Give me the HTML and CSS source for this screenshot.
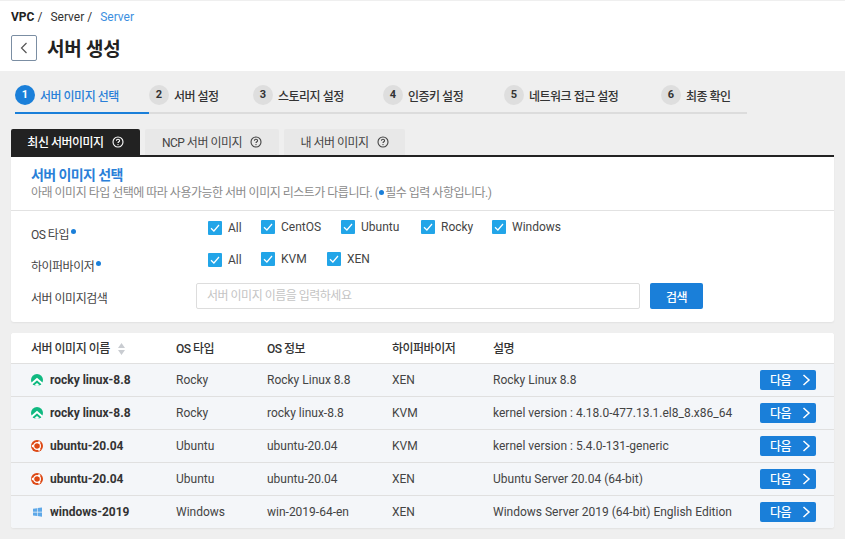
FILE: index.html
```html
<!DOCTYPE html>
<html lang="ko">
<head>
    <meta charset="UTF-8">
    <meta name="viewport" content="width=device-width, initial-scale=1.0">
    <title>서버 생성</title>
    <link rel="stylesheet" href="styles.css">
</head>
<body>
    <svg class="defs" width="0" height="0">
        <symbol id="check" viewBox="0 0 14 14"><path d="M3 7.2 5.9 10 11 4" fill="none" stroke="#fff" stroke-width="1.2"/></symbol>
        <symbol id="help" viewBox="0 0 12 12"><circle cx="6" cy="6" r="5" fill="none" stroke="currentColor" stroke-width="1.1"/><path d="M4.4 4.8C4.4 3.8 5.1 3.3 6 3.3S7.6 3.9 7.6 4.7C7.6 5.8 6 5.8 6 7.1" fill="none" stroke="currentColor" stroke-width="1.1"/><circle cx="6" cy="8.6" r=".7" fill="currentColor"/></symbol>
        <symbol id="rocky" viewBox="0 0 12 12"><circle cx="6" cy="6" r="6" fill="#10b981"/><path d="M.9 9.6 6 5 11.100 9.600" fill="none" stroke="#fff" stroke-width="2"/><path d="M3.400 11.300 6 8.900 8.600 11.300 6 12Z" fill="#fff"/></symbol>
        <symbol id="ubuntu" viewBox="0 0 12 12"><circle cx="6" cy="6" r="6" fill="#dd4814"/><circle cx="6" cy="6" r="3.400" fill="none" stroke="#fff" stroke-width="1.200"/><circle cx="1.900" cy="6" r="1.200" fill="#fff"/><circle cx="8.100" cy="2.400" r="1.200" fill="#fff"/><circle cx="8.100" cy="9.600" r="1.200" fill="#fff"/></symbol>
        <symbol id="windows" viewBox="0 0 12 12"><path d="M2 2.800 6 2.200V5.800H2ZM6.600 2.100 11 1.500V5.800H6.600ZM2 6.400H6V10L2 9.400ZM6.600 6.400H11V10.700L6.600 10.100Z" fill="#5ea8e8"/></symbol>
    </svg>

    <header class="page-head">
        <div class="crumbs">
            <b>VPC</b><span class="sep">/</span><span>Server</span><span class="sep">/</span><span class="current">Server</span>
        </div>
        <div class="title-row">
            <button class="back" aria-label="뒤로">
                <svg width="10" height="12" viewBox="0 0 10 12"><path d="M7.500 1 2.500 6 7.500 11" fill="none" stroke="#555" stroke-width="1.200"/></svg>
            </button>
            <h1>서버 생성</h1>
        </div>
    </header>

    <ol class="steps">
        <li class="step step-1 active"><i>1</i>서버 이미지 선택</li>
        <li class="step step-2"><i>2</i>서버 설정</li>
        <li class="step step-3"><i>3</i>스토리지 설정</li>
        <li class="step step-4"><i>4</i>인증키 설정</li>
        <li class="step step-5"><i>5</i>네트워크 접근 설정</li>
        <li class="step step-6"><i>6</i>최종 확인</li>
    </ol>

    <div class="tabs">
        <a class="tab tab-1 active">최신 서버이미지 <svg><use href="#help"/></svg></a>
        <a class="tab tab-2">NCP 서버 이미지 <svg><use href="#help"/></svg></a>
        <a class="tab tab-3">내 서버 이미지 <svg><use href="#help"/></svg></a>
    </div>

    <section class="card filter">
        <div class="filter-head">
            <h2>서버 이미지 선택</h2>
            <p>아래 이미지 타입 선택에 따라 사용가능한 서버 이미지 리스트가 다릅니다. (<span class="dot"></span>필수 입력 사항입니다.)</p>
        </div>
        <div class="form-row os-row">
            <span class="label">OS 타입<span class="dot"></span></span>
            <div class="opts">
                <label class="opt first w-all"><span class="box"><svg><use href="#check"/></svg></span>All</label>
                <label class="opt w-centos"><span class="box"><svg><use href="#check"/></svg></span>CentOS</label>
                <label class="opt w-ubuntu"><span class="box"><svg><use href="#check"/></svg></span>Ubuntu</label>
                <label class="opt w-rocky"><span class="box"><svg><use href="#check"/></svg></span>Rocky</label>
                <label class="opt"><span class="box"><svg><use href="#check"/></svg></span>Windows</label>
            </div>
        </div>
        <div class="form-row hv-row">
            <span class="label">하이퍼바이저<span class="dot"></span></span>
            <div class="opts">
                <label class="opt first w-all"><span class="box"><svg><use href="#check"/></svg></span>All</label>
                <label class="opt w-kvm"><span class="box"><svg><use href="#check"/></svg></span>KVM</label>
                <label class="opt"><span class="box"><svg><use href="#check"/></svg></span>XEN</label>
            </div>
        </div>
        <div class="form-row search-row">
            <span class="label search-label">서버 이미지검색</span>
            <input class="search" type="text" placeholder="서버 이미지 이름을 입력하세요">
            <button class="search-btn">검색</button>
        </div>
    </section>

    <section class="card list">
        <table>
            <colgroup>
                <col class="c1"><col class="c2"><col class="c3"><col class="c4"><col class="c5"><col class="c6">
            </colgroup>
            <thead>
                <tr>
                    <th>서버 이미지 이름<svg class="sort" width="9" height="12" viewBox="0 0 9 12"><path d="M4.500 0 8 5H1ZM1 7H8L4.500 12Z" fill="#c9ccd1"/></svg></th>
                    <th>OS 타입</th>
                    <th>OS 정보</th>
                    <th>하이퍼바이저</th>
                    <th>설명</th>
                    <th></th>
                </tr>
            </thead>
            <tbody>
                <tr>
                    <td class="name"><svg><use href="#rocky"/></svg>rocky linux-8.8</td>
                    <td>Rocky</td><td>Rocky Linux 8.8</td><td>XEN</td><td>Rocky Linux 8.8</td>
                    <td><button class="next">다음<svg width="9" height="12" viewBox="0 0 9 12"><path d="M1.500 1 7 6 1.500 11" fill="none" stroke="#fff" stroke-width="1.500"/></svg></button></td>
                </tr>
                <tr>
                    <td class="name"><svg><use href="#rocky"/></svg>rocky linux-8.8</td>
                    <td>Rocky</td><td>rocky linux-8.8</td><td>KVM</td><td>kernel version : 4.18.0-477.13.1.el8_8.x86_64</td>
                    <td><button class="next">다음<svg width="9" height="12" viewBox="0 0 9 12"><path d="M1.500 1 7 6 1.500 11" fill="none" stroke="#fff" stroke-width="1.500"/></svg></button></td>
                </tr>
                <tr>
                    <td class="name"><svg><use href="#ubuntu"/></svg>ubuntu-20.04</td>
                    <td>Ubuntu</td><td>ubuntu-20.04</td><td>KVM</td><td>kernel version : 5.4.0-131-generic</td>
                    <td><button class="next">다음<svg width="9" height="12" viewBox="0 0 9 12"><path d="M1.500 1 7 6 1.500 11" fill="none" stroke="#fff" stroke-width="1.500"/></svg></button></td>
                </tr>
                <tr>
                    <td class="name"><svg><use href="#ubuntu"/></svg>ubuntu-20.04</td>
                    <td>Ubuntu</td><td>ubuntu-20.04</td><td>XEN</td><td>Ubuntu Server 20.04 (64-bit)</td>
                    <td><button class="next">다음<svg width="9" height="12" viewBox="0 0 9 12"><path d="M1.500 1 7 6 1.500 11" fill="none" stroke="#fff" stroke-width="1.500"/></svg></button></td>
                </tr>
                <tr>
                    <td class="name"><svg><use href="#windows"/></svg>windows-2019</td>
                    <td>Windows</td><td>win-2019-64-en</td><td>XEN</td><td>Windows Server 2019 (64-bit) English Edition</td>
                    <td><button class="next">다음<svg width="9" height="12" viewBox="0 0 9 12"><path d="M1.500 1 7 6 1.500 11" fill="none" stroke="#fff" stroke-width="1.500"/></svg></button></td>
                </tr>
            </tbody>
        </table>
    </section>
</body>
</html>
```

FILE: styles.css
```css
/* General reset */
* {
    margin: 0;
    padding: 0;
    box-sizing: border-box;
}

body {
    font-family: Roboto, 'Noto Sans CJK KR', sans-serif;
    font-size: 12px;
    background: #efefef;
    color: #333;
    overflow: hidden;
    height: 539px;
}

.defs {
    position: absolute;
}

/* Page header */
.page-head {
    background: #fff;
    height: 70px;
    margin-top: 1px;
    padding: 9px 11px 0;
}

.crumbs {
    display: flex;
    height: 14px;
    line-height: 14px;
    color: #333;
}

.crumbs b {
    color: #222;
}

.crumbs .sep {
    margin: 0 8px 0 3px;
}

.crumbs .current {
    color: #3d8fe0;
}

.title-row {
    display: flex;
    align-items: center;
    margin-top: 10px;
}

.back {
    width: 26px;
    height: 26px;
    display: flex;
    align-items: center;
    justify-content: center;
    background: #fff;
    border: 1px solid #7b8ea3;
    border-radius: 2px;
}

h1 {
    font-size: 19px;
    font-weight: 700;
    letter-spacing: -0.2px;
    color: #222;
    margin-left: 10px;
}

/* Steps */
.steps {
    list-style: none;
    display: flex;
    width: 732px;
    height: 29px;
    margin: 14px 0 0 15px;
    border-bottom: 2px solid #dcdcdc;
}

.step {
    display: flex;
    align-items: center;
    height: 20px;
    font-weight: 500;
    letter-spacing: -0.5px;
    color: #333;
}

.step i {
    width: 20px;
    height: 20px;
    line-height: 20px;
    margin-right: 5px;
    border-radius: 50%;
    background: #dedede;
    text-align: center;
    font-style: normal;
    font-size: 11px;
    font-weight: 700;
    letter-spacing: 0;
}

.step-1 { width: 134px; }
.step-2 { width: 104px; }
.step-3 { width: 130px; }
.step-4 { width: 121px; }
.step-5 { width: 157px; }

.step.active {
    height: 29px;
    padding-bottom: 7px;
    border-bottom: 2px solid #1a7fd9;
    color: #2a7fd8;
}

.step.active i {
    background: #1a7fd9;
    color: #fff;
}

/* Tabs */
.tabs {
    display: flex;
    margin: 15px 0 0 11px;
    height: 26px;
}

.tab {
    display: flex;
    align-items: center;
    justify-content: center;
    gap: 6px;
    height: 26px;
    padding-bottom: 1px;
    background: #e8e8e8;
    color: #444;
    letter-spacing: -0.5px;
    border-radius: 2px 2px 0 0;
}

.tab svg {
    width: 12px;
    height: 12px;
    margin-left: 2px;
}

.tab-1 { width: 129px; margin-right: 5px; }
.tab-2 { width: 134px; margin-right: 5px; }
.tab-3 { width: 121px; }

.tab.active {
    background: #222;
    color: #fff;
    font-weight: 500;
}

/* Cards */
.card {
    width: 823px;
    margin-left: 11px;
    background: #fff;
    border-radius: 0 0 3px 3px;
    box-shadow: 0 1px 2px rgba(0, 0, 0, 0.06);
}

.filter {
    height: 167px;
    border-top: 2px solid #222;
}

.filter-head {
    height: 54px;
    padding: 9px 20px 0;
    border-bottom: 1px solid #e2e2e2;
}

h2 {
    font-size: 14px;
    font-weight: 700;
    letter-spacing: -0.6px;
    line-height: 18px;
    color: #2a7fd8;
}

.filter-head p {
    font-size: 12px;
    line-height: 17px;
    margin-top: 1px;
    letter-spacing: -0.5px;
    color: #8a8a8a;
}

.dot {
    display: inline-block;
    width: 5px;
    height: 5px;
    border-radius: 50%;
    background: #1a7fd9;
    margin: 0 1px 3px;
    vertical-align: middle;
}

.form-row {
    display: flex;
    padding-left: 20px;
}

.label {
    width: 177px;
    flex: none;
    color: #444;
    letter-spacing: -0.5px;
}

.label .dot {
    margin: 0 0 8px 2px;
}

.os-row, .hv-row {
    height: 32px;
    padding-top: 9px;
}

.os-row .label, .hv-row .label {
    padding-top: 5px;
}

.search-row {
    margin-top: 8px;
}

.opts {
    display: flex;
}

.opt {
    display: flex;
    align-items: center;
    height: 14px;
    color: #444;
}

.opt.first {
    margin-top: 1px;
}

.box {
    width: 14px;
    height: 14px;
    margin-right: 6px;
    background: #22a5e8;
    border-radius: 1px;
    display: block;
}

.box svg {
    display: block;
    width: 14px;
    height: 14px;
}

.w-all { width: 53px; }
.w-centos { width: 80px; }
.w-ubuntu { width: 80px; }
.w-rocky { width: 71px; }
.w-kvm { width: 66px; }

.search-label {
    width: 165px;
    padding-top: 6px;
}

.search {
    width: 444px;
    height: 26px;
    padding: 0 10px;
    font: 12px Roboto, 'Noto Sans CJK KR', sans-serif;
    letter-spacing: -0.5px;
    border: 1px solid #ddd;
    border-radius: 2px;
}

.search::placeholder {
    color: #c4c4c4;
}

.search-btn {
    width: 53px;
    height: 26px;
    margin-left: 10px;
    background: #1a7fd9;
    color: #fff;
    border: 0;
    border-radius: 2px;
    font: 500 12px Roboto, 'Noto Sans CJK KR', sans-serif;
    letter-spacing: -0.5px;
}

/* Image list */
.list {
    margin-top: 11px;
    border-radius: 3px;
    overflow: hidden;
}

table {
    width: 100%;
    table-layout: fixed;
    border-collapse: collapse;
}

.c1 { width: 165px; }
.c2 { width: 91px; }
.c3 { width: 125px; }
.c4 { width: 101px; }
.c5 { width: 267px; }
.c6 { width: 74px; }

th {
    height: 30px;
    text-align: left;
    font-weight: 500;
    letter-spacing: -0.5px;
    color: #333;
    background: #fff;
    border-bottom: 1px solid #e0e0e0;
}

td {
    height: 33px;
    background: #f4f6f9;
    color: #444;
    border-bottom: 1px solid #e0e0e0;
}

tr:last-child td {
    border-bottom: 0;
}

th:first-child, td:first-child {
    padding-left: 20px;
}

.sort {
    margin-left: 7px;
    vertical-align: -2px;
}

td.name {
    font-weight: 700;
    color: #333;
    white-space: nowrap;
}

td.name svg {
    width: 12px;
    height: 12px;
    margin-right: 7px;
    vertical-align: -2px;
}

.next {
    display: flex;
    align-items: center;
    gap: 11px;
    width: 56px;
    height: 20px;
    padding-left: 10px;
    background: #1a7fd9;
    color: #fff;
    border: 0;
    border-radius: 2px;
    font: 500 12px Roboto, 'Noto Sans CJK KR', sans-serif;
    letter-spacing: -0.5px;
}
```
